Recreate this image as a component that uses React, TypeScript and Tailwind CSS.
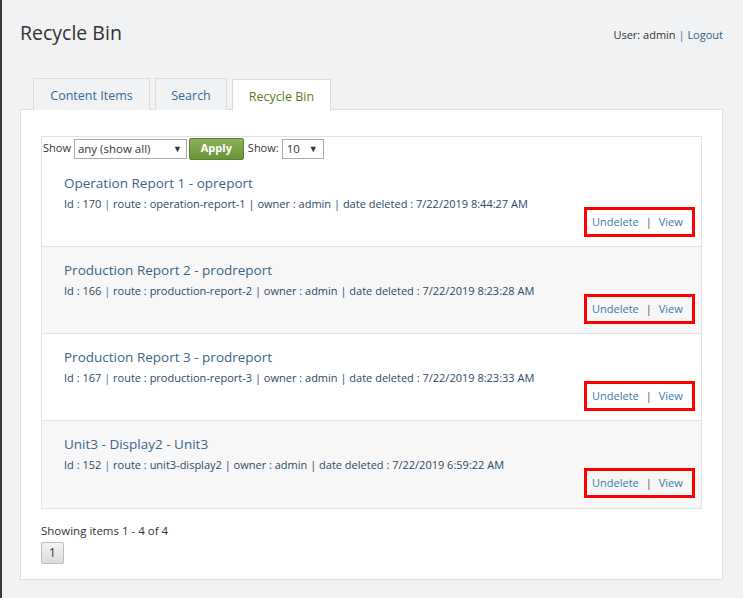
import { useState } from "react";

type Item = {
  title: string;
  id: number;
  route: string;
  owner: string;
  deleted: string;
};

const items: Item[] = [
  { title: "Operation Report 1 - opreport", id: 170, route: "operation-report-1", owner: "admin", deleted: "7/22/2019 8:44:27 AM" },
  { title: "Production Report 2 - prodreport", id: 166, route: "production-report-2", owner: "admin", deleted: "7/22/2019 8:23:28 AM" },
  { title: "Production Report 3 - prodreport", id: 167, route: "production-report-3", owner: "admin", deleted: "7/22/2019 8:23:33 AM" },
  { title: "Unit3 - Display2 - Unit3", id: 152, route: "unit3-display2", owner: "admin", deleted: "7/22/2019 6:59:22 AM" },
];

const tabs = [
  { label: "Content Items", width: "w-[117px]" },
  { label: "Search", width: "w-[72px]" },
  { label: "Recycle Bin", width: "w-[99px]" },
];

const RecycleRow = ({ item, shaded }: { item: Item; shaded: boolean }) => (
  <div
    className={`flex flex-col h-[87px] border-b border-[#e3e3e3] last:border-b-0 pl-[22px] pr-[6px] ${
      shaded ? "bg-[#f7f7f7]" : "bg-white"
    }`}
  >
    <div className="mt-[13px] text-[13.5px] leading-[20px] text-[#3b6589]">{item.title}</div>
    <div className="mt-[3px] text-[11px] leading-[16px] text-[#2c4a66]">
      Id : {item.id} <span className="text-[#3a7db5]">|</span> route : {item.route}{" "}
      <span className="text-[#3b3f6e]">|</span> owner : {item.owner}{" "}
      <span className="text-[#3b3f6e]">|</span> date deleted : {item.deleted}
    </div>
    <div className="flex justify-end -mt-[5px]">
      <div className="flex items-center h-[30px] w-[111px] border-[3px] border-[#ff0000] pl-[5px] text-[11px] text-[#3a7aa6]">
        <a className="hover:underline cursor-pointer">Undelete</a>
        <span className="mx-[7px] text-[#3a5a80]">|</span>
        <a className="hover:underline cursor-pointer">View</a>
      </div>
    </div>
  </div>
);

export default function App() {
  const [active, setActive] = useState(2);
  const [filter, setFilter] = useState("any");
  const [pageSize, setPageSize] = useState("10");

  return (
    <div
      className="min-h-[598px] bg-[#f1f2f4] border-l-2 border-[#3a3a3a] text-[#333]"
      style={{ fontFamily: '"Open Sans", "Noto Sans", sans-serif' }}
    >
      <div className="flex items-start justify-between pl-[18px] pr-[20px] pt-[19px]">
        <h1 className="text-[19.5px] leading-[28px] text-[#333]">Recycle Bin</h1>
        <div className="mt-[8px] text-[11px] text-[#333]">
          User: admin <span className="text-[#3a7db5]">|</span>{" "}
          <a className="text-[#2f5f82] cursor-pointer">Logout</a>
        </div>
      </div>

      <div className="mt-[31px] ml-[31px] flex gap-[5px]">
        {tabs.map((t, i) => (
          <button
            key={t.label}
            onClick={() => setActive(i)}
            className={`${t.width} h-[32px] pt-[3px] border border-b-0 border-[#dcdcdc] text-[12.5px] text-center ${
              i === active ? "bg-white text-[#5d7a1f] relative top-[1px]" : "bg-[#f1f2f4] text-[#336b96]"
            }`}
          >
            {t.label}
          </button>
        ))}
      </div>

      <div className="ml-[18px] mr-[20px] -mt-[1px] bg-white border border-[#dedede] pt-[26px] pb-[15px] px-[20px]">
        <div className="border border-[#e3e3e3]">
          <div className="flex items-center h-[23px] text-[11px] text-[#333]">
            <span className="ml-[1px] mr-[3px]">Show</span>
            <select
              value={filter}
              onChange={(e) => setFilter(e.target.value)}
              className="h-[20px] w-[113px] border border-[#a9a9a9] bg-white text-[11.5px] pl-[3px] appearance-none"
            >
              <option value="any">any (show all)</option>
            </select>
            <span className="-ml-[14px] mr-[4px] text-[9px] pointer-events-none">▼</span>
            <button className="h-[22px] w-[55px] ml-[3px] rounded-[2px] border border-[#5d8132] bg-gradient-to-b from-[#8ab15a] to-[#6c9438] text-white text-[11px] font-bold">
              Apply
            </button>
            <span className="ml-[4px] mr-[3px]">Show:</span>
            <select
              value={pageSize}
              onChange={(e) => setPageSize(e.target.value)}
              className="h-[20px] w-[42px] border border-[#a9a9a9] bg-white text-[11.5px] pl-[4px] appearance-none"
            >
              <option value="10">10</option>
            </select>
            <span className="-ml-[15px] text-[9px] pointer-events-none">▼</span>
          </div>
          {items.map((it, i) => (
            <RecycleRow key={it.id} item={it} shaded={i % 2 === 1} />
          ))}
        </div>

        <div className="mt-[13px] text-[11.5px] text-[#333]">Showing items 1 - 4 of 4</div>
        <button className="mt-[3px] h-[22px] w-[23px] border border-[#bdbdbd] rounded-[2px] bg-gradient-to-b from-[#f4f4f4] to-[#dcdcdc] text-[12px] text-[#333]">
          1
        </button>
      </div>
    </div>
  );
}
